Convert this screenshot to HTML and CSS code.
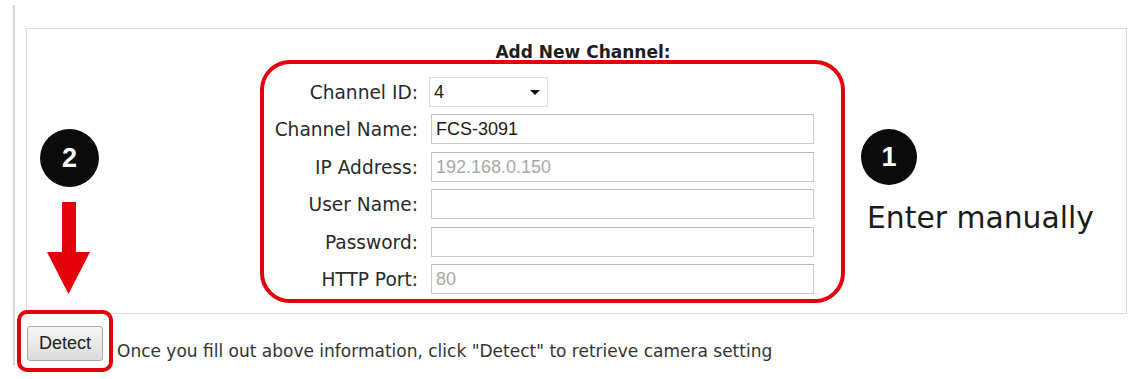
FILE: index.html
```html
<!DOCTYPE html>
<html>
	<head>
		<meta charset="UTF-8">
		<title>Add New Channel</title>
		<link rel="stylesheet" href="styles.css">
	</head>
	<body>
		<div id="frame">
			<div id="panel">
				<div class="title">Add New Channel:</div>
				<div class="main">
					<!-- 左侧标注：步骤2 -->
					<div class="leftNote">
						<div class="step step2">2</div>
						<svg class="arrow" width="43" height="92" viewBox="0 0 43 92">
							<polygon points="15,0 29,0 29,50 43,50 21.5,92 0,50 15,50" fill="#e3000b"/>
						</svg>
					</div>
					<!-- 红框表单 -->
					<div class="callout">
						<div class="form">
							<label>Channel ID:</label>
							<div class="select"><span>4</span><i></i></div>
							<label>Channel Name:</label>
							<div class="input">FCS-3091</div>
							<label>IP Address:</label>
							<div class="input dim">192.168.0.150</div>
							<label>User Name:</label>
							<div class="input"></div>
							<label>Password:</label>
							<div class="input"></div>
							<label>HTTP Port:</label>
							<div class="input dim">80</div>
						</div>
					</div>
					<!-- 右侧标注：步骤1 -->
					<div class="rightNote">
						<div class="step">1</div>
						<div class="hint">Enter manually</div>
					</div>
				</div>
			</div>
			<div class="bottom">
				<div class="btnBox"><a class="btn" href="javascript:;">Detect</a></div>
				<div class="tip">Once you fill out above information, click "Detect" to retrieve camera setting</div>
			</div>
		</div>
	</body>
</html>
```

FILE: styles.css
```css
*{
	margin: 0;
	padding: 0;
	box-sizing: border-box;
}
html, body{
	min-height: 379px;
	background: #fff;
}
body{
	font-family: "DejaVu Sans", Verdana, sans-serif;
	color: #222;
}
#frame{
	margin: 5px 0 0 13px;
	height: 360px;
	width: 1116px;
	border-left: 2px solid #d6d6d6;
	padding: 23px 0 0 11px;
}
#panel{
	width: 1101px;
	height: 286px;
	border: 1px solid #dadada;
	background: #fff;
}
.title{
	height: 31px;
	padding: 14px 0 0 13px;
	text-align: center;
	font-size: 17px;
	line-height: 18px;
	font-weight: bold;
	color: #1e1e1e;
}
.main{
	display: flex;
	align-items: flex-start;
}
.leftNote{
	width: 233px;
	display: flex;
	flex-direction: column;
}
.step{
	width: 56px;
	height: 56px;
	border-radius: 50%;
	background: #0b0b0b;
	color: #fff;
	font-family: "Liberation Sans", Arial, sans-serif;
	font-weight: bold;
	font-size: 27px;
	line-height: 56px;
	text-align: center;
}
.step2{
	width: 59px;
	height: 58px;
	line-height: 58px;
	margin: 69px 0 0 13px;
}
.arrow{
	display: block;
	margin: 15px 0 0 20px;
}
.callout{
	width: 585px;
	height: 243px;
	border: 4px solid #e3000b;
	border-radius: 30px;
}
.form{
	display: grid;
	grid-template-columns: 154px 383px;
	grid-auto-rows: 30px;
	column-gap: 13px;
	row-gap: 7.4px;
	padding: 13px 27px 0 0;
}
.form label{
	text-align: right;
	font-size: 18.6px;
	line-height: 32px;
	color: #2a2a2a;
	white-space: nowrap;
}
.input, .select{
	height: 30px;
	border: 1px solid #c9c9c9;
	border-top-color: #b9b9b9;
	background: #fff;
	font-family: "Liberation Sans", Arial, sans-serif;
	font-size: 18px;
	line-height: 28px;
	padding-left: 4px;
	color: #1a1a1a;
}
.input.dim{
	color: #a8a8a8;
}
.select{
	width: 119px;
	margin-left: -2px;
	border-color: #dcdcdc;
	display: flex;
	align-items: center;
	justify-content: space-between;
	padding-right: 7px;
}
.select i{
	width: 0;
	height: 0;
	border-left: 5px solid transparent;
	border-right: 5px solid transparent;
	border-top: 5px solid #111;
}
.rightNote{
	margin: 69px 0 0 16px;
}
.hint{
	margin: 16px 0 0 6px;
	font-size: 29.8px;
	line-height: 34px;
	color: #1b1b1b;
	white-space: nowrap;
}
.bottom{
	display: flex;
	margin: -4px 0 0 -9px;
}
.btnBox{
	border: 4px solid #e3000b;
	border-radius: 10px;
	padding: 12px 6px 7px 6px;
	background: #fff;
}
.btn{
	display: block;
	width: 76px;
	height: 35px;
	border: 1px solid #a9a9a9;
	border-radius: 3px;
	background: linear-gradient(#f6f6f6, #dcdcdc);
	font-family: "Liberation Sans", Arial, sans-serif;
	font-size: 18px;
	line-height: 33px;
	text-align: center;
	text-decoration: none;
	color: #222;
}
.tip{
	align-self: flex-end;
	margin: 0 0 11px 4px;
	font-size: 17px;
	line-height: 20px;
	color: #333;
	white-space: nowrap;
}
```
